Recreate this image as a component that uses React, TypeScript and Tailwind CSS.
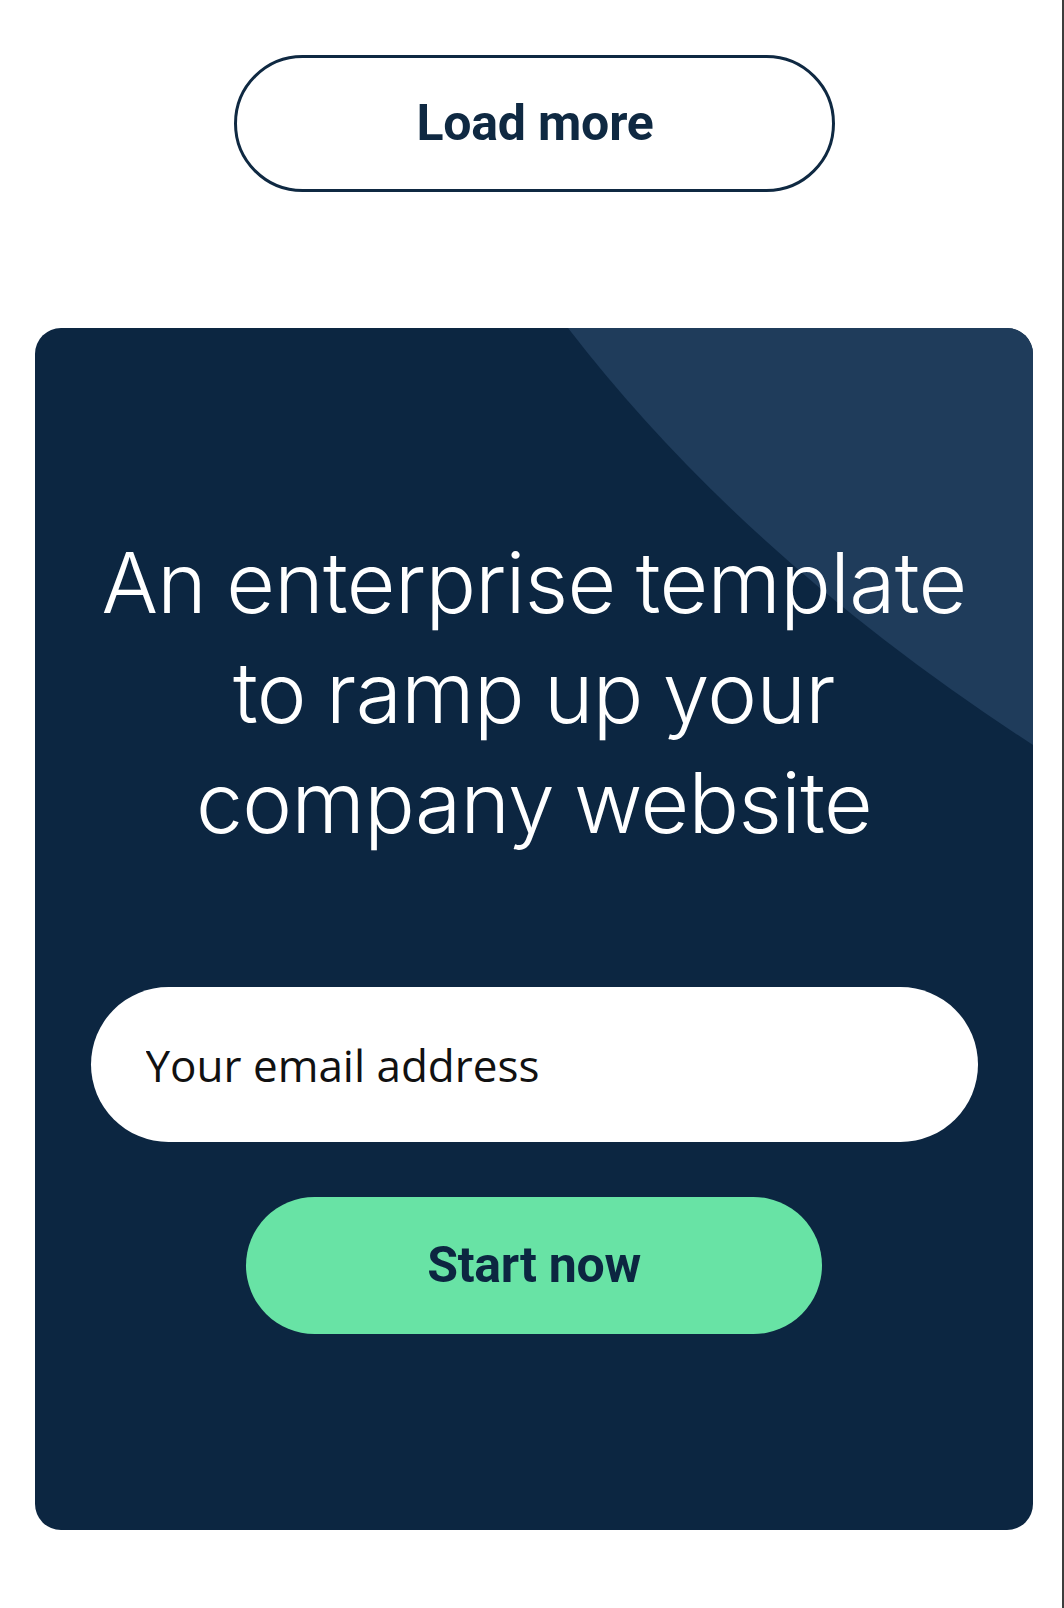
import React from "react";

export default function App() {
  return (
    <div className="flex w-[1064px] min-h-[1608px] bg-white">
      <div className="flex-1 flex flex-col pl-[35px] pr-[29px]">
        <div className="pt-[55px] flex justify-center">
          <button
            className="w-[601px] h-[137px] rounded-full border-[3px] border-[#0f2942] bg-white flex items-center justify-center pl-[2px] text-[50px] font-bold text-[#0f2942] tracking-[-0.2px]"
            style={{ fontFamily: "Roboto, 'Liberation Sans', sans-serif" }}
          >
            Load more
          </button>
        </div>

        <div className="relative mt-[136px] w-[998px] h-[1202px] rounded-[26px] overflow-hidden bg-[#0c2641]">
          <svg
            className="absolute inset-0"
            width="998"
            height="1202"
            viewBox="0 0 998 1202"
            aria-hidden="true"
          >
            <path d="M 533 0 Q 710 230 998 417 L 998 0 Z" fill="#1f3c5b" />
          </svg>

          <div className="relative flex flex-col items-center pt-[200px] pb-[196px] px-[40px]">
            <h1
              className="text-white text-center text-[84px] leading-[110px] font-[350] tracking-[-0.6px] [word-spacing:-3px]"
              style={{ fontFamily: "Inter, 'Noto Sans', sans-serif" }}
            >
              An enterprise template
              <br />
              to ramp up your
              <br />
              company website
            </h1>

            <div className="mt-[129px] w-[887px] h-[155px] rounded-full bg-white flex items-center pl-[55px]">
              <input
                type="email"
                placeholder="Your email address"
                className="w-full bg-transparent outline-none text-[44px] text-[#111] placeholder:text-[#111]"
                style={{ fontFamily: "'Open Sans', 'Noto Sans', sans-serif" }}
              />
            </div>

            <button
              className="mt-[55px] w-[576px] h-[137px] rounded-full bg-[#68e3a5] flex items-center justify-center text-[50px] font-bold text-[#0c2641] tracking-[-0.3px]"
              style={{ fontFamily: "Roboto, 'Liberation Sans', sans-serif" }}
            >
              Start now
            </button>
          </div>
        </div>
      </div>
      <div className="w-[2px] bg-[#3d3d3d]" />
    </div>
  );
}
